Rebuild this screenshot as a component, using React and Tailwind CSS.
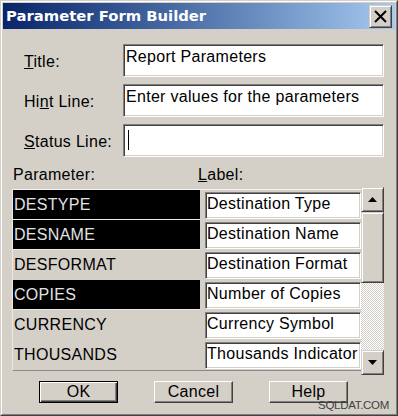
import React from "react";

const bevelOut =
  "border border-t-[#d4d0c8] border-l-[#d4d0c8] border-r-[#404040] border-b-[#404040] shadow-[inset_1px_1px_0_#ffffff,inset_-1px_-1px_0_#808080]";
const sunken =
  "border border-t-[#808080] border-l-[#808080] border-r-white border-b-white shadow-[inset_1px_1px_0_#404040,inset_-1px_-1px_0_#d4d0c8]";

function Field({ label, value, cursor }) {
  return (
    <div className="flex items-start">
      <div className="w-[99px] pt-[7.5px] leading-[20px]">{label}</div>
      <div className={"w-[261px] h-[33px] bg-white pl-[2px] pt-[1.5px] leading-[20px] whitespace-nowrap " + sunken}>
        {cursor ? <div className="w-px h-[20px] bg-black mt-[3.5px] ml-[1.5px]" /> : value}
      </div>
    </div>
  );
}

const rows = [
  { p: "DESTYPE", l: "Destination Type", sel: true },
  { p: "DESNAME", l: "Destination Name", sel: true },
  { p: "DESFORMAT", l: "Destination Format", sel: false },
  { p: "COPIES", l: "Number of Copies", sel: true },
  { p: "CURRENCY", l: "Currency Symbol", sel: false },
  { p: "THOUSANDS", l: "Thousands Indicator", sel: false },
];

function Btn({ children, def }) {
  const cls = def
    ? "border border-black shadow-[inset_1px_1px_0_#ffffff,inset_-1px_-1px_0_#404040,inset_-2px_-2px_0_#808080]"
    : "border border-t-white border-l-white border-r-[#404040] border-b-[#404040] shadow-[inset_-1px_-1px_0_#808080]";
  return (
    <div className={"w-[79px] h-[22px] bg-[#d4d0c8] flex items-center justify-center leading-[20px] " + cls}>
      {children}
    </div>
  );
}

export default function App() {
  return (
    <div className="w-[398px] h-[416px] relative bg-[#d4d0c8] font-['Liberation_Sans',Arial,sans-serif] text-[16px] tracking-[0.3px] text-black">
      <div className="w-full h-full border border-t-[#d4d0c8] border-l-[#d4d0c8] border-r-[#404040] border-b-[#404040]">
        <div className="w-full h-full border border-t-white border-l-white border-r-[#808080] border-b-[#808080] p-px flex flex-col">
          {/* Title bar */}
          <div className="h-[26px] flex items-center justify-between bg-linear-to-r from-[#0a246a] to-[#a6caf0] pl-[3px] pr-[3px]">
            <span className="font-['DejaVu_Sans',sans-serif] font-bold text-[14.8px] text-white tracking-normal leading-none pt-[1px]">
              Parameter Form Builder
            </span>
            <div className={"w-[23px] h-[23px] bg-[#d4d0c8] flex items-center justify-center " + bevelOut}>
              <svg width="13" height="13" viewBox="0 0 13 13">
                <path d="M1 1 L12 12 M12 1 L1 12" stroke="black" strokeWidth="2" fill="none" />
              </svg>
            </div>
          </div>

          {/* Body */}
          <div className="flex flex-col pt-[15px]">
            <div className="flex flex-col gap-[7px] pl-[21px]">
              <Field label={<><u>T</u>itle:</>} value="Report Parameters" />
              <Field label={<>Hi<u>n</u>t Line:</>} value="Enter values for the parameters" />
              <Field label={<><u>S</u>tatus Line:</>} cursor />
            </div>

            <div className="mt-[8px] flex pl-[10px] leading-[20px]">
              <div className="w-[185px]">Parameter:</div>
              <div>
                <u>L</u>abel:
              </div>
            </div>

            <div className="mt-[4px] pl-[9px] flex items-start">
              <div className="border-t border-l border-b border-t-[#f4f4f4] border-l-[#ece9e2] border-b-[#8a8a8a] flex flex-col">
                {rows.map((r) => (
                  <div key={r.p} className="flex h-[30px]">
                    <div
                      className={
                        "w-[187px] h-[30px] pl-[1px] leading-[29px] border-b " +
                        (r.sel ? "bg-black text-[#e2e2e2] border-b-[#e8e8e8]" : "border-b-transparent")
                      }
                    >
                      {r.p}
                    </div>
                    <div className={"ml-[5px] mt-[2px] w-[156px] h-[27px] bg-white pl-[1px] leading-[20px] pt-[0.5px] whitespace-nowrap overflow-hidden " + sunken}>
                      {r.l}
                    </div>
                  </div>
                ))}
              </div>
              <div className="w-[23px] h-[188px] -mt-[2px] -mb-[4px] flex flex-col">
                <div className={"h-[25px] bg-[#d4d0c8] flex items-center justify-center " + bevelOut}>
                  <svg width="9" height="5" viewBox="0 0 9 5">
                    <path d="M4.5 0 L9 5 L0 5 Z" fill="black" />
                  </svg>
                </div>
                <div className={"h-[71px] bg-[#d4d0c8] " + bevelOut} />
                <div className="flex-1 bg-[repeating-conic-gradient(#ffffff_0_25%,#d4d0c8_0_50%)] bg-size-[2px_2px]" />
                <div className={"h-[25px] bg-[#d4d0c8] flex items-center justify-center " + bevelOut}>
                  <svg width="9" height="5" viewBox="0 0 9 5">
                    <path d="M0 0 L9 0 L4.5 5 Z" fill="black" />
                  </svg>
                </div>
              </div>
            </div>

            <div className="mt-[10px] flex gap-[36px] pl-[36px]">
              <Btn def>OK</Btn>
              <Btn>Cancel</Btn>
              <Btn>Help</Btn>
            </div>
          </div>
        </div>
      </div>
      <div className="absolute right-[9px] top-[400px] text-[11.5px] leading-none tracking-[-0.3px] text-[#404040]">
        SQLDAT.COM
      </div>
    </div>
  );
}
